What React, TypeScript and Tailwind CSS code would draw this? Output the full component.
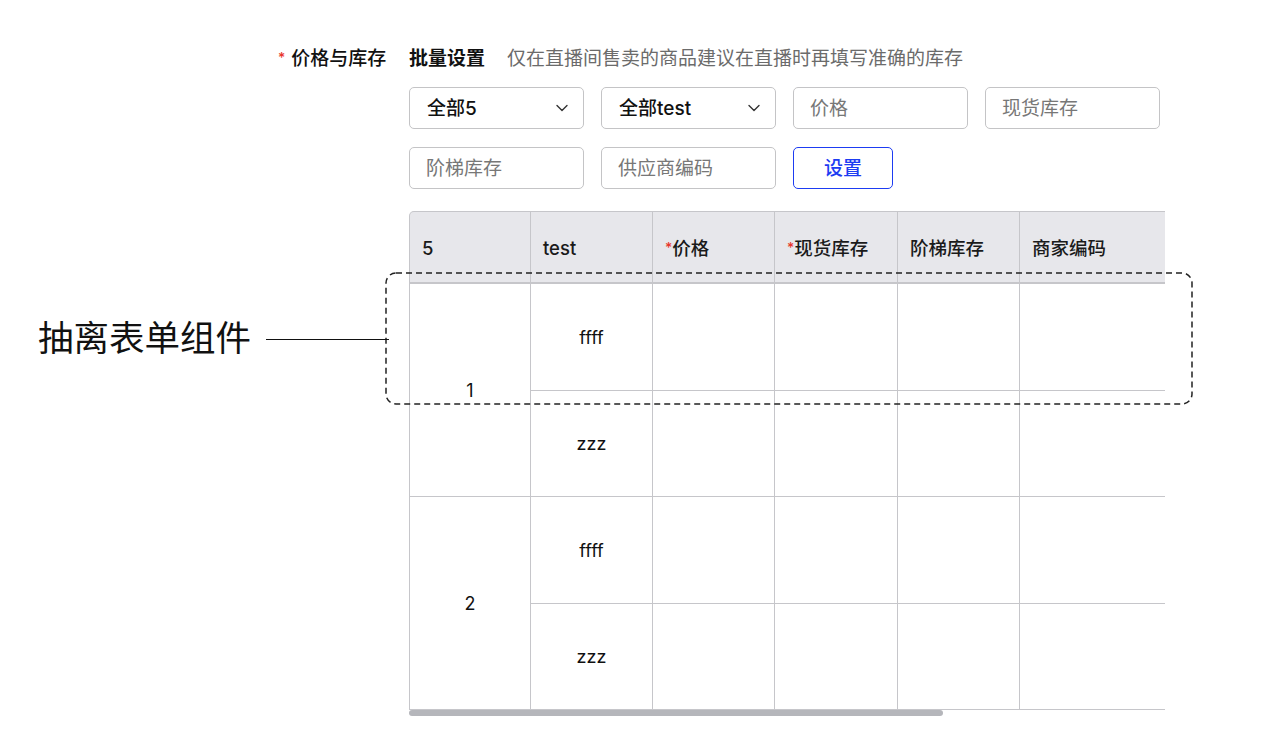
import React from 'react';

const FONT = { fontFamily: 'Inter, "Noto Sans CJK SC", sans-serif' };

const Chevron = () => (
  <svg width="14" height="14" viewBox="0 0 14 14" fill="none" className="text-[#333]">
    <path d="M2 4.5 L7 9.5 L12 4.5" stroke="currentColor" strokeWidth="1.4" strokeLinecap="round" strokeLinejoin="round" />
  </svg>
);

const SelectBox = ({ label }: { label: string }) => (
  <div className="h-[42px] border-[1.5px] border-[#c4c4c6] rounded-[5px] flex items-center justify-between pl-[17px] pr-[14px] text-[19px] text-[#111] font-medium bg-white">
    <span className="pt-[3px]">{label}</span>
    <Chevron />
  </div>
);

const InputBox = ({ placeholder }: { placeholder: string }) => (
  <div className="h-[42px] border-[1.5px] border-[#c4c4c6] rounded-[5px] flex items-center pl-[16px] pt-[3px] text-[19px] text-[#777] bg-white">
    {placeholder}
  </div>
);

const Star = () => <span className="text-[#e8362b] text-[14px] relative top-[-2px]">*</span>;

const headers: { text: string; required?: boolean }[] = [
  { text: '5' },
  { text: 'test' },
  { text: '价格', required: true },
  { text: '现货库存', required: true },
  { text: '阶梯库存' },
  { text: '商家编码' },
  { text: '' },
];

const groups = [
  { id: '1', items: ['ffff', 'zzz'] },
  { id: '2', items: ['ffff', 'zzz'] },
];

const colWidths = [122, 122, 122, 123, 122, 170, 290];

export default function App() {
  return (
    <div className="relative w-[1280px] h-[756px] bg-white text-[#111]" style={FONT}>
      <div className="pl-[278px] pt-[47px]">
        <div className="flex items-center h-[24px]">
          <div className="w-[131px] flex items-center text-[19px] font-medium">
            <Star />
            <span className="ml-[6px]">价格与库存</span>
          </div>
          <span className="text-[19px] font-semibold">批量设置</span>
          <span className="ml-[22px] text-[19px] text-[#6b6b6b]">仅在直播间售卖的商品建议在直播时再填写准确的库存</span>
        </div>

        <div className="ml-[131px] mt-[16px] grid grid-cols-[175px_175px_175px_175px] gap-x-[17px] gap-y-[18px]">
          <SelectBox label="全部5" />
          <SelectBox label="全部test" />
          <InputBox placeholder="价格" />
          <InputBox placeholder="现货库存" />
          <InputBox placeholder="阶梯库存" />
          <InputBox placeholder="供应商编码" />
          <button className="w-[100px] h-[42px] border-[1.5px] border-[#1d3cf2] rounded-[5px] text-[#1d3cf2] text-[19px] font-medium bg-white pt-[3px]">
            设置
          </button>
        </div>

        <div className="ml-[131px] mt-[22px] w-[756px] overflow-hidden relative">
          <table className="table-fixed border-separate border-spacing-0 w-[1071px]">
            <colgroup>
              {colWidths.map((w, i) => (
                <col key={i} style={{ width: w }} />
              ))}
            </colgroup>
            <thead>
              <tr>
                {headers.map((h, i) => (
                  <th
                    key={i}
                    className={`h-[73px] pt-[4px] bg-[#e7e7eb] border-t-[1.5px] border-b-2 border-[#c6c6ca] ${i === 0 ? 'border-l-[1.5px] rounded-tl-[5px]' : ''} ${i < headers.length - 1 ? 'border-r-[1.5px]' : ''} text-left pl-[12px] text-[18.5px] font-medium text-[#1a1a1a]`}
                  >
                    {h.required && <span className="text-[#e8362b] text-[14px] relative top-[-2px]">*</span>}
                    {h.text}
                  </th>
                ))}
              </tr>
            </thead>
            <tbody>
              {groups.map((g) =>
                g.items.map((item, j) => (
                  <tr key={g.id + j}>
                    {j === 0 && (
                      <td rowSpan={2} className="border-l-[1.5px] border-r-[1.5px] border-b-[1.5px] border-[#c6c6ca] text-center align-middle text-[18px]">
                        {g.id}
                      </td>
                    )}
                    <td className="h-[106.5px] pt-[1px] border-r-[1.5px] border-b-[1.5px] border-[#c6c6ca] text-center text-[18px]">{item}</td>
                    <td className="border-r-[1.5px] border-b-[1.5px] border-[#c6c6ca]" />
                    <td className="border-r-[1.5px] border-b-[1.5px] border-[#c6c6ca]" />
                    <td className="border-r-[1.5px] border-b-[1.5px] border-[#c6c6ca]" />
                    <td className="border-r-[1.5px] border-b-[1.5px] border-[#c6c6ca]" />
                    <td className="border-b-[1.5px] border-[#c6c6ca]" />
                  </tr>
                ))
              )}
            </tbody>
          </table>
          <div className="h-[7px] flex">
            <div className="w-[534px] h-[6px] rounded-full bg-[#b5b6bb]" />
          </div>
        </div>
      </div>

      {/* annotation overlay */}
      <svg className="absolute left-[385px] top-[272px] pointer-events-none" width="808" height="133" viewBox="0 0 808 133">
        <rect x="1" y="1" width="806" height="131" rx="10" ry="10" fill="none" stroke="#222" strokeWidth="1.5" strokeDasharray="6 4" />
      </svg>
      <div className="absolute left-[38px] top-[319px] flex items-center">
        <span className="text-[35.5px] leading-[40px] text-[#111]">抽离表单组件</span>
        <div className="ml-[15px] w-[123px] h-px bg-[#111]" />
      </div>
    </div>
  );
}
